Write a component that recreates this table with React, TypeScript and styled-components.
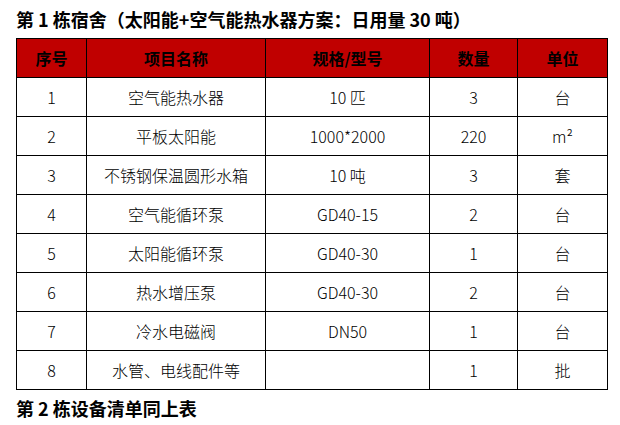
import styled, { createGlobalStyle } from 'styled-components';

const GlobalStyle = createGlobalStyle`
  body {
    margin: 0;
    background: #ffffff;
    font-family: "Noto Sans CJK SC", "Liberation Sans", sans-serif;
  }
`;

interface Item {
  no: string;
  name: string;
  spec: string;
  qty: string;
  unit: string;
}

const items: Item[] = [
  { no: '1', name: '空气能热水器', spec: '10 匹', qty: '3', unit: '台' },
  { no: '2', name: '平板太阳能', spec: '1000*2000', qty: '220', unit: 'm²' },
  { no: '3', name: '不锈钢保温圆形水箱', spec: '10 吨', qty: '3', unit: '套' },
  { no: '4', name: '空气能循环泵', spec: 'GD40-15', qty: '2', unit: '台' },
  { no: '5', name: '太阳能循环泵', spec: 'GD40-30', qty: '1', unit: '台' },
  { no: '6', name: '热水增压泵', spec: 'GD40-30', qty: '2', unit: '台' },
  { no: '7', name: '冷水电磁阀', spec: 'DN50', qty: '1', unit: '台' },
  { no: '8', name: '水管、电线配件等', spec: '', qty: '1', unit: '批' },
];

const columns = [
  { title: '序号', width: 70 },
  { title: '项目名称', width: 179 },
  { title: '规格/型号', width: 164 },
  { title: '数量', width: 88 },
  { title: '单位', width: 90 },
];

export default function App() {
  return (
    <>
      <GlobalStyle />
      <Page>
        <Heading>第 1 栋宿舍（太阳能+空气能热水器方案：日用量 30 吨）</Heading>
        <Table>
          <colgroup>
            {columns.map((c) => (
              <col key={c.title} style={{ width: c.width }} />
            ))}
          </colgroup>
          <thead>
            <tr>
              {columns.map((c) => (
                <HeadCell key={c.title}>{c.title}</HeadCell>
              ))}
            </tr>
          </thead>
          <tbody>
            {items.map((it) => (
              <tr key={it.no}>
                <Cell>{it.no}</Cell>
                <Cell>{it.name}</Cell>
                <Cell>{it.spec}</Cell>
                <Cell>{it.qty}</Cell>
                <Cell>{it.unit}</Cell>
              </tr>
            ))}
          </tbody>
        </Table>
        <Footer>第 2 栋设备清单同上表</Footer>
      </Page>
    </>
  );
}

const Page = styled.div`
  width: 620px;
  height: 425px;
  box-sizing: border-box;
  padding: 7px 13px 0 16px;
  display: flex;
  flex-direction: column;
`;

const Heading = styled.div`
  font-size: 18px;
  font-weight: bold;
  line-height: 24px;
  height: 31px;
  color: #000;
  white-space: nowrap;
`;

const Table = styled.table`
  border-collapse: collapse;
  table-layout: fixed;
  width: 591px;
  border: 1px solid #000;
`;

const HeadCell = styled.th`
  background: #c00000;
  color: #000;
  font-size: 16px;
  font-weight: bold;
  height: 38px;
  padding: 0;
  border: 1px solid #000;
  text-align: center;
`;

const Cell = styled.td`
  font-size: 16px;
  font-weight: 300;
  color: #000;
  height: 38px;
  padding: 0;
  border: 1px solid #000;
  text-align: center;
`;

const Footer = styled.div`
  margin-top: 6px;
  font-size: 18px;
  font-weight: bold;
  line-height: 24px;
  color: #000;
`;
